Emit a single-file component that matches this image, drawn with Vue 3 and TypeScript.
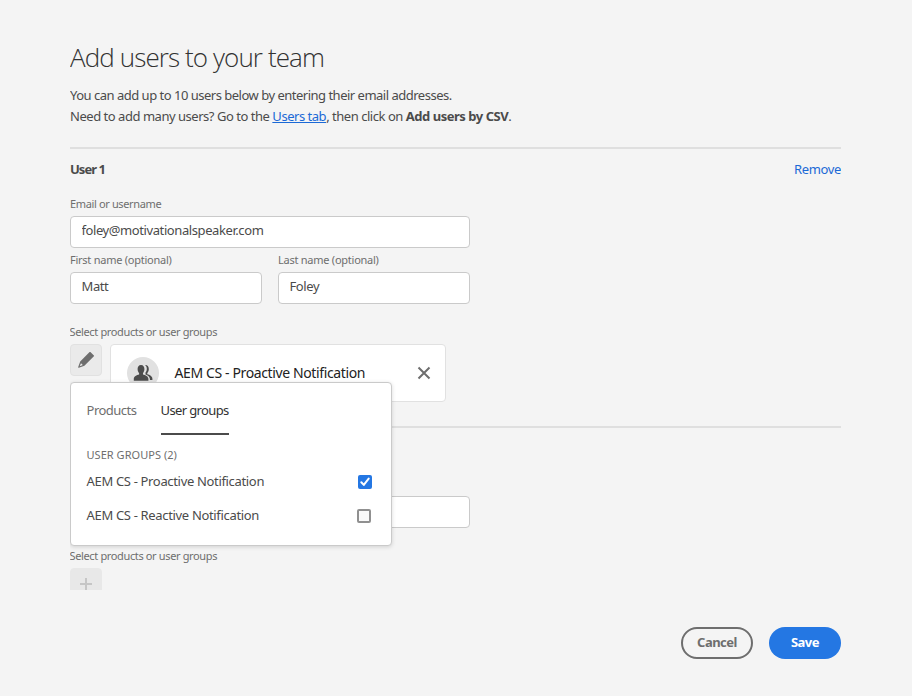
<script setup lang="ts">
import { ref } from 'vue'

interface Group { name: string; selected: boolean }

const email = ref('foley@motivationalspeaker.com')
const firstName = ref('Matt')
const lastName = ref('Foley')
const secondEmail = ref('')
const tab = ref<'products' | 'groups'>('groups')
const groups = ref<Group[]>([
  { name: 'AEM CS - Proactive Notification', selected: true },
  { name: 'AEM CS - Reactive Notification', selected: false },
])
</script>

<template>
  <main class="dialog">
    <div class="content">
      <h1>Add users to your team</h1>
      <p class="intro">
        You can add up to 10 users below by entering their email addresses.<br>
        <span class="need">Need to add many users? Go to the <a href="#">Users tab</a>, then click on <strong>Add users by CSV</strong>.</span>
      </p>

      <section class="user">
        <header>
          <h2>User 1</h2>
          <button class="remove" type="button">Remove</button>
        </header>
        <label class="field">
          <span>Email or username</span>
          <input v-model="email" class="email" type="text">
        </label>
        <div class="names">
          <label class="field">
            <span>First name (optional)</span>
            <input v-model="firstName" type="text">
          </label>
          <label class="field">
            <span>Last name (optional)</span>
            <input v-model="lastName" type="text">
          </label>
        </div>
        <div class="select-label">Select products or user groups</div>
        <div class="picker">
          <button class="tool" type="button">
            <svg width="18" height="18" viewBox="0 0 18 18">
              <path fill="#6e6e6e" d="m13.400 1.100 3.500 3.300c.3.300.3.600 0 .9L7.400 14.800 1.900 16.800c-.6.200-.9-.1-.7-.7l2-5.500 9.400-9.500c.2-.2.600-.2.800 0ZM4 12.200l-1.300 3.100 3.100-1.300Z" />
            </svg>
          </button>
          <div class="chip">
            <span class="avatar">
              <svg width="20" height="20" viewBox="0 0 20 20">
                <path fill="#4b4b4b" d="M8 2c2.300 0 3.400 1.700 3.400 4.100 0 1.700-.6 3.100-1.400 4.100v1.300c2.400.6 5.400 1.900 5.400 4.300v2H.8v-2c0-2.400 2.900-3.700 5.300-4.300v-1.300C5.200 9.200 4.600 7.800 4.600 6.100 4.600 3.700 5.700 2 8 2Z" />
                <path fill="#4b4b4b" d="M12 2c2.300-.2 3.800 1.400 3.800 3.900 0 1.700-.6 3.100-1.500 4.100v1.200c2.400.6 5.100 2 5.100 4.500v1.400h-2.500v-1c0-2.300-1.900-3.700-4.400-4.700V9.600c.8-1 1.300-2.200 1.300-3.900 0-1.600-.6-2.900-1.800-3.700Z" />
              </svg>
            </span>
            <span class="chip-name">AEM CS - Proactive Notification</span>
            <button class="close" type="button">
              <svg width="14" height="14" viewBox="0 0 14 14">
                <path d="m1.500 1.500 11 11m0-11-11 11" fill="none" stroke="#6e6e6e" stroke-width="2" />
              </svg>
            </button>
          </div>

          <div class="popover">
            <nav>
              <button type="button" :class="{ active: tab === 'products' }" @click="tab = 'products'">Products</button>
              <button type="button" :class="{ active: tab === 'groups' }" @click="tab = 'groups'">User groups</button>
            </nav>
            <div class="caption">USER GROUPS (2)</div>
            <div v-for="g in groups" :key="g.name" class="row" @click="g.selected = !g.selected">
              <span>{{ g.name }}</span>
              <span class="box" :class="{ checked: g.selected }">
                <svg v-if="g.selected" width="14" height="14" viewBox="0 0 14 14">
                  <path d="m3.300 7.200 2.500 2.700L10.700 3.600" fill="none" stroke="#fff" stroke-width="2" stroke-linecap="round" stroke-linejoin="round" />
                </svg>
              </span>
            </div>
          </div>
        </div>
      </section>

      <section class="user second">
        <input v-model="secondEmail" class="email" type="text">
        <div class="select-label">Select products or user groups</div>
        <button class="tool add" type="button">
          <svg width="14" height="14" viewBox="0 0 14 14">
            <path d="M7 1v12M1 7h12" fill="none" stroke="#c6c6c6" stroke-width="2" />
          </svg>
        </button>
      </section>
    </div>

    <footer>
      <button class="btn cancel" type="button">Cancel</button>
      <button class="btn save" type="button">Save</button>
    </footer>
  </main>
</template>

<style>
body { background: #f4f4f4; }
</style>

<style scoped>
.dialog {
  box-sizing: border-box;
  width: 912px;
  height: 696px;
  padding: 39px 71px 37px 70px;
  background: #f4f4f4;
  color: #4b4b4b;
  font: 13px/20px "Noto Sans", "Open Sans", sans-serif;
  display: flex;
  flex-direction: column;
  justify-content: space-between;
}
.content { height: 551px; overflow: hidden; }
h1, h2, p { margin: 0; }
button {
  border: 0;
  padding: 0;
  background: none;
  font: inherit;
  color: inherit;
  cursor: pointer;
}
svg { display: block; }
h1 {
  font-family: "Open Sans", sans-serif;
  font-size: 26px;
  line-height: 36px;
  font-weight: 300;
  letter-spacing: -0.9px;
  color: #323232;
}
.intro {
  margin-top: 10px;
  line-height: 21px;
  letter-spacing: -0.5px;
}
.need { letter-spacing: -0.47px; }
.intro a { color: #1b69d6; }
.user {
  margin-top: 20px;
  border-top: 2px solid #dfdfdf;
}
header {
  display: flex;
  justify-content: space-between;
  padding-top: 10px;
  height: 20px;
}
h2 {
  font-size: 13px;
  line-height: 20px;
  font-weight: 700;
  letter-spacing: -0.98px;
}
.remove { color: #1b69d6; letter-spacing: -0.35px; }
.field { display: block; }
header + .field { margin-top: 17px; }
.field span, .select-label {
  display: block;
  height: 16px;
  font-size: 11px;
  line-height: 16px;
  letter-spacing: -0.36px;
  color: #6e6e6e;
}
.names .field span { letter-spacing: -0.25px; }
input {
  display: block;
  box-sizing: border-box;
  width: 192px;
  height: 32px;
  margin: 4px 0 0;
  padding: 0 10.5px 4px;
  border: 1px solid #cacaca;
  border-radius: 4px;
  background: #fff;
  color: #4b4b4b;
  font: inherit;
  letter-spacing: -0.41px;
  outline: 0;
}
.email { width: 400px; }
.names { display: flex; gap: 16px; margin-top: 4px; }
.select-label { margin: 20px 0 4px; text-indent: -0.5px; }
.picker {
  position: relative;
  display: flex;
  align-items: flex-start;
  gap: 8px;
  width: 376px;
}
.tool {
  box-sizing: border-box;
  width: 32px;
  height: 32px;
  border: 1px solid #e1e1e1;
  border-radius: 4px;
  background: #eaeaea;
  display: grid;
  place-items: center;
}
.tool.add { border-color: #e8e8e8; background: #e8e8e8; }
.chip {
  box-sizing: border-box;
  flex: 1;
  height: 58px;
  padding: 0 14px 0 16px;
  border: 1px solid #e1e1e1;
  border-radius: 4px;
  background: #fff;
  display: flex;
  align-items: center;
}
.avatar {
  width: 32px;
  height: 32px;
  border-radius: 50%;
  background: #e1e1e1;
  display: grid;
  place-items: center;
}
.chip-name {
  flex: 1;
  margin-left: 15.5px;
  font-size: 14px;
  letter-spacing: -0.38px;
  color: #222;
}
.popover {
  position: absolute;
  z-index: 1;
  top: 38px;
  left: 0;
  box-sizing: border-box;
  width: 322px;
  height: 164px;
  padding: 0 15px 0 15.5px;
  border: 1px solid #cacaca;
  border-radius: 4px;
  background: #fff;
  box-shadow: 0 1px 4px rgba(0, 0, 0, .15);
}
nav { display: flex; gap: 24px; height: 52px; }
nav button {
  box-sizing: border-box;
  width: 50px;
  height: 52px;
  padding-top: 4px;
  border-bottom: 2px solid transparent;
  color: #6e6e6e;
  letter-spacing: -0.52px;
  line-height: 20px;
  white-space: nowrap;
}
nav button.active {
  width: 68px;
  border-color: #4b4b4b;
  color: #323232;
  letter-spacing: -0.62px;
}
.caption {
  height: 16px;
  padding: 12px 0 1px;
  font-size: 11px;
  line-height: 16px;
  letter-spacing: .04px;
  color: #6e6e6e;
}
.row {
  height: 34px;
  display: flex;
  align-items: center;
  justify-content: space-between;
  padding-right: 4px;
  letter-spacing: -0.33px;
}
.box {
  box-sizing: border-box;
  width: 14px;
  height: 14px;
  margin: 2px 1px 0 0;
  border: 2px solid #909090;
  border-radius: 2px;
  background: #fafafa;
}
.box.checked { margin-right: 0; border: 0; background: #2477e3; }
.second { margin-top: 24px; }
.second .email { margin-top: 68px; }
footer { display: flex; justify-content: flex-end; gap: 16px; }
.btn {
  box-sizing: border-box;
  width: 72px;
  height: 32px;
  padding-bottom: 2px;
  border-radius: 16px;
  font-weight: 700;
  letter-spacing: -0.5px;
}
.cancel { border: 2px solid #6e6e6e; color: #6e6e6e; }
.save { background: #2477e3; color: #fff; }
</style>
